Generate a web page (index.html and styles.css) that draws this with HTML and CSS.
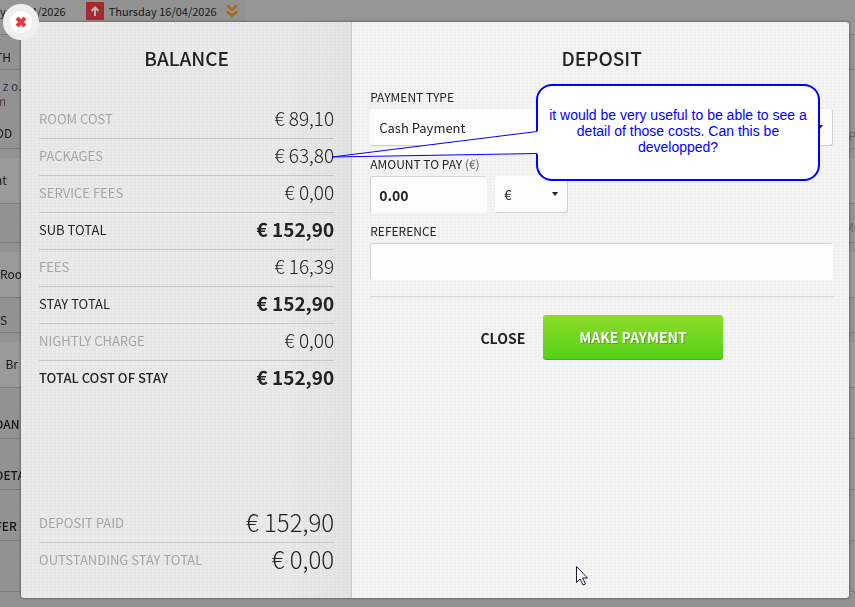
FILE: index.html
```html
<!DOCTYPE html>
<html lang="en">
<head>
<meta charset="utf-8">
<title>Balance and deposit</title>
<link rel="stylesheet" href="styles.css">
</head>
<body>
<div class="page">
  <header class="dates">
    <span class="date">y 15/04/2026</span>
    <span class="date date-out">
      <svg class="icon-up" viewBox="0 0 18 18" aria-hidden="true"><rect width="18" height="18" fill="#a52a2b"/><path d="M9 14V6M5.500 9 9 5.500l3.500 3.500" fill="none" stroke="#b5b5b5" stroke-width="2"/></svg>
      Thursday 16/04/2026
      <svg class="icon-down" viewBox="0 0 12 14" aria-hidden="true"><path d="M1 1.500 6 5.500 11 1.500M1 7.500 6 11.500 11 7.500" fill="none" stroke="#a86a14" stroke-width="2.600"/></svg>
    </span>
  </header>
  <div class="rows">
    <div class="row row-gap"></div>
    <div class="row row-head"><span class="cut">TH</span></div>
    <div class="row row-guest"><span class="link">&nbsp;z o.</span><span class="cut visited">m</span><span class="cut period">OD</span><span class="edge">Po</span></div>
    <div class="row row-field"><span class="cut">nt</span></div>
    <div class="row row-short"><span></span><span class="edge">MO</span></div>
    <div class="row row-field"><span>Room</span></div>
    <div class="row row-head"><span>S</span></div>
    <div class="row row-field"><span>&nbsp;&nbsp;Br</span></div>
    <div class="row row-section"><span class="cut">DAN</span></div>
    <div class="row row-section"><span class="cut">DETA</span></div>
    <div class="row row-section"><span class="cut">FER</span></div>
    <div class="row row-section"></div>
  </div>
</div>

<div class="overlay">
  <main class="modal">
    <section class="balance">
      <h2>BALANCE</h2>
      <dl class="costs">
        <div><dt>ROOM COST</dt><dd>€ 89,10</dd></div>
        <div><dt>PACKAGES</dt><dd>€ 63,80</dd></div>
        <div><dt>SERVICE FEES</dt><dd>€ 0,00</dd></div>
        <div class="sum"><dt>SUB TOTAL</dt><dd>€ 152,90</dd></div>
        <div><dt>FEES</dt><dd>€ 16,39</dd></div>
        <div class="sum"><dt>STAY TOTAL</dt><dd>€ 152,90</dd></div>
        <div><dt>NIGHTLY CHARGE</dt><dd>€ 0,00</dd></div>
        <div class="sum total"><dt>TOTAL COST OF STAY</dt><dd>€ 152,90</dd></div>
      </dl>
      <dl class="costs paid">
        <div><dt>DEPOSIT PAID</dt><dd>€ 152,90</dd></div>
        <div><dt>OUTSTANDING STAY TOTAL</dt><dd>€ 0,00</dd></div>
      </dl>
    </section>
    <form class="deposit">
      <h2>DEPOSIT</h2>
      <div class="field">
        <label for="type">PAYMENT TYPE</label>
        <div class="select"><select id="type"><option>Cash Payment</option></select></div>
      </div>
      <div class="field">
        <label for="amount">AMOUNT TO PAY <span class="unit">(€)</span></label>
        <div class="amount">
          <input id="amount" type="text" value="0.00">
          <div class="select currency"><select aria-label="Currency"><option>€</option></select></div>
        </div>
      </div>
      <div class="field">
        <label for="reference">REFERENCE</label>
        <input id="reference" type="text">
      </div>
      <div class="actions">
        <button type="button" class="cancel">CLOSE</button>
        <button type="button" class="pay">MAKE PAYMENT</button>
      </div>
    </form>
    <button type="button" class="dismiss" aria-label="Close dialog">
      <svg viewBox="0 0 36 36" aria-hidden="true"><circle cx="18" cy="18" r="11" fill="#fff"/><path d="M14 14l8 8M22 14l-8 8" stroke="#e63b3c" stroke-width="4" fill="none"/></svg>
    </button>
    <aside class="callout">
      <p>it would be very useful to be able to see a detail of those costs. Can this be developped?</p>
      <svg class="pointer" viewBox="0 0 208 32" aria-hidden="true"><path d="M208 2 2 28 208 25Z" fill="#fff"/><path d="M207 2.500 2 28 207 24.500" fill="none" stroke="#00f" stroke-width="1"/></svg>
    </aside>
    <svg class="cursor" viewBox="0 0 13 20" aria-hidden="true"><path d="M.5.500v16l3.500-3.500 3 6 2.500-1-3-6h5z" fill="#fff" stroke="#1c1c2c"/></svg>
  </main>
</div>
</body>
</html>
```

FILE: styles.css
```css
* { box-sizing: border-box; }

body {
  margin: 0;
  min-height: 100vh;
  overflow: hidden;
  background: #929292;
  color: #222326;
  font-family: "Noto Sans CJK SC", "Noto Sans", sans-serif;
  font-size: 13px;
  line-height: 20px;
}

/* Dimmed booking page behind the dialog */
.page {
  position: fixed;
  inset: 0;
  overflow: hidden;
  font-size: 12px;
  color: #161616;
}

.dates {
  display: flex;
  gap: 20px;
  height: 25px;
  background: #969696;
  font-size: 11px;
}

.date {
  display: flex;
  align-items: center;
  padding-bottom: 3px;
  white-space: nowrap;
}

.date-out {
  gap: 5px;
  padding-right: 7px;
  background: #929292;
}

.icon-up { width: 18px; height: 18px; }
.icon-down { width: 12px; height: 14px; margin-left: 4px; }

.row {
  position: relative;
  display: flex;
  flex-direction: column;
  border-bottom: 1px solid #7c7c7c;
}

.row-gap { height: 10px; background: #979797; }
.row-head { height: 35px; padding-top: 12px; }
.row-guest { height: 79px; padding-top: 8px; line-height: 15px; }
.row-field { height: 46px; margin-top: 9px; padding-top: 12px; background: #9a9a9a; }
.row-short { height: 39px; }
.row-section { height: 51px; padding-top: 26px; font-weight: 500; }
.cut { margin-left: -5px; }
.link { color: #33374d; }
.visited { color: #55404a; }
.period { margin-top: 17px; }

.edge {
  position: absolute;
  right: -8px;
  bottom: 5px;
  color: #666;
}

.overlay {
  position: relative;
  display: flex;
  min-height: 100vh;
  padding: 22px 6px 9px 21px;
}

.modal {
  position: relative;
  display: flex;
  flex: 1;
  border-radius: 3px;
  background-color: #f3f3f3;
  background-image: radial-gradient(circle, rgba(0, 0, 0, .03) 0 1px, transparent 1px);
  background-size: 4px 3px;
  box-shadow: 0 0 3px rgba(0, 0, 0, .5);
}

h2 {
  margin: 0;
  padding-top: 22px;
  font-size: 19px;
  font-weight: 500;
  line-height: 28px;
  text-align: center;
}

.balance {
  display: flex;
  flex: 0 0 40%;
  flex-direction: column;
  padding: 0 17px 19px 18px;
  border-right: 1px solid #c9c9c9;
  border-radius: 3px 0 0 3px;
  background: linear-gradient(to right, rgba(0, 0, 0, .045) 80%, rgba(0, 0, 0, .065));
}

.costs { margin: 30px 0 0; }
.paid { margin-top: auto; }

.costs div {
  display: flex;
  align-items: center;
  justify-content: space-between;
  height: 37px;
  padding-bottom: 2px;
  border-bottom: 1px solid #c8c8c8;
}

.costs div:last-child { border-bottom: 0; height: 36px; }
.costs dt { color: #a5a5a5; }
.costs dd { margin: 0 0 2px; font-size: 19px; font-weight: 300; }
.costs .sum dt { color: #222326; }
.costs .sum dd { font-weight: 700; }
.costs .total dt { font-weight: 500; }
.costs.paid dd { font-size: 24px; }

.deposit {
  flex: 1;
  min-width: 0;
  padding: 0 16px 0 18px;
}

.deposit h2 { margin-bottom: 15px; }
.field { margin-bottom: 8px; }

label {
  display: block;
  height: 22px;
  font-size: 12px;
}

.unit { color: #666; }

input, select {
  display: block;
  width: 100%;
  height: 37px;
  padding: 0 8px;
  border: 1px solid transparent;
  border-color: #d2d2d2 transparent transparent #d2d2d2;
  border-radius: 3px;
  background: #fcfcfc;
  color: #222326;
  font-family: inherit;
  font-size: 13px;
}

select {
  appearance: none;
  border-color: transparent #cfcfcf #cfcfcf transparent;
}

.select { position: relative; }

.select::after {
  content: "";
  position: absolute;
  top: 16px;
  right: 10px;
  border: solid transparent;
  border-width: 4px 3px 0;
  border-top-color: #222;
}

.amount { display: flex; gap: 8px; }
.amount input { width: 117px; font-size: 14px; font-weight: 700; }
.currency { width: 73px; }

.actions {
  display: flex;
  justify-content: center;
  margin-top: 16px;
  padding: 18px 18px 0 0;
  border-top: 1px solid #d6d6d6;
}

button {
  padding: 0;
  border: 0;
  font-family: inherit;
  font-weight: 700;
}

.actions button { height: 45px; font-size: 14px; }

.cancel {
  padding: 0 18px;
  background: none;
  color: #222326;
}

.actions .pay {
  padding: 0 36px;
  border-bottom: 1px solid #45ad18;
  border-radius: 3px;
  background: linear-gradient(#8fdb2c, #56d116);
  color: #fff;
  text-shadow: 1px 1px 1px rgba(0, 0, 0, .25);
}

.dismiss {
  position: absolute;
  top: -18px;
  left: -18px;
  width: 36px;
  height: 36px;
  border-radius: 50%;
  background: #efefef;
}

.dismiss svg { display: block; }

/* Reviewer annotation drawn over the dialog */
.callout {
  position: absolute;
  top: 62px;
  left: 515px;
  display: flex;
  align-items: center;
  width: 284px;
  height: 97px;
  padding: 0 8px 4px;
  border: 2px solid #00f;
  border-radius: 16px;
  background: #fff;
  color: #00f;
  font-family: "Liberation Sans", sans-serif;
  font-size: 14px;
  line-height: 16px;
  text-align: center;
}

.callout p { margin: 0; }

.pointer {
  position: absolute;
  top: 43px;
  left: -208px;
  width: 208px;
  height: 32px;
}

.cursor {
  position: absolute;
  top: 544px;
  left: 555px;
  width: 13px;
  height: 20px;
}
```
